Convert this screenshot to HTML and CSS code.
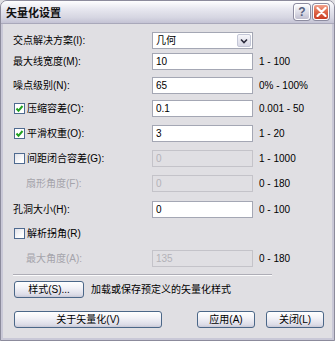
FILE: index.html
```html
<!DOCTYPE html>
<html lang="zh">

<head>
    <meta charset="UTF-8">
    <title>矢量化设置</title>
    <link rel="stylesheet" href="styles.css">
</head>

<body>
    <div class="window">
        <div class="titlebar">
            <span class="title">矢量化设置</span>
            <div class="captionButtons">
                <span class="capBtn helpBtn">?</span>
                <span class="capBtn closeBtn">
                    <svg width="11" height="10" viewBox="0 0 11 10">
                        <path d="M1.5 1 L9.5 9 M9.5 1 L1.5 9" stroke="#fff" stroke-width="2.2" stroke-linecap="round" />
                    </svg>
                </span>
            </div>
        </div>

        <div class="client">
            <div class="form">
                <!-- row 1 -->
                <div class="label">交点解决方案(I):</div>
                <div class="combo">
                    <span class="comboText">几何</span>
                    <span class="comboBtn">
                        <svg width="8" height="6" viewBox="0 0 8 6">
                            <path d="M1 1.5 L4 4.5 L7 1.5" fill="none" stroke="#2b2b3b" stroke-width="1.6" />
                        </svg>
                    </span>
                </div>
                <div class="range"></div>

                <!-- row 2 -->
                <div class="label">最大线宽度(M):</div>
                <input class="field" type="text" value="10">
                <div class="range">1 - 100</div>

                <!-- row 3 -->
                <div class="label">噪点级别(N):</div>
                <input class="field" type="text" value="65">
                <div class="range">0% - 100%</div>

                <!-- row 4 -->
                <div class="label"><span class="check checked"></span>压缩容差(C):</div>
                <input class="field" type="text" value="0.1">
                <div class="range">0.001 - 50</div>

                <!-- row 5 -->
                <div class="label"><span class="check checked"></span>平滑权重(O):</div>
                <input class="field" type="text" value="3">
                <div class="range">1 - 20</div>

                <!-- row 6 -->
                <div class="label"><span class="check"></span>间距闭合容差(G):</div>
                <input class="field" type="text" value="0" disabled>
                <div class="range">1 - 1000</div>

                <!-- row 7 -->
                <div class="label grayed indent">扇形角度(F):</div>
                <input class="field" type="text" value="0" disabled>
                <div class="range">0 - 180</div>

                <!-- row 8 -->
                <div class="label">孔洞大小(H):</div>
                <input class="field" type="text" value="0">
                <div class="range">0 - 100</div>

                <!-- row 9 -->
                <div class="label"><span class="check"></span>解析拐角(R)</div>
                <div></div>
                <div></div>

                <!-- row 10 -->
                <div class="label grayed indent">最大角度(A):</div>
                <input class="field" type="text" value="135" disabled>
                <div class="range">0 - 180</div>
            </div>

            <div class="separator"></div>

            <div class="styleRow">
                <button class="btn styleBtn">样式(S)...</button>
                <span class="hint">加载或保存预定义的矢量化样式</span>
            </div>

            <div class="buttonRow">
                <button class="btn aboutBtn">关于矢量化(V)</button>
                <button class="btn smallBtn applyBtn">应用(A)</button>
                <button class="btn smallBtn">关闭(L)</button>
            </div>
        </div>
    </div>
</body>

</html>
```

FILE: styles.css
```css
body {
    margin: 0;
    padding: 0;
    background-color: #e0dfe3;
    font-family: "Liberation Sans", "Noto Sans CJK SC", sans-serif;
    font-size: 10px;
    color: #000;
    overflow: hidden;
}

.window {
    width: 335px;
    height: 341px;
    box-sizing: border-box;
    border: 1px solid #8c8b9c;
    border-radius: 7px 7px 0 0;
    background-color: #e0dfe3;
    overflow: hidden;
    display: flex;
    flex-direction: column;
}

.titlebar {
    height: 22px;
    flex: none;
    display: flex;
    align-items: center;
    padding-left: 5px;
    padding-right: 5px;
    background: linear-gradient(#fefeff, #e8e8f0 35%, #d6d6e2 75%, #c4c3d4);
    border-bottom: 1px solid #a9a8ba;
}

.title {
    font-family: "Noto Sans CJK SC", sans-serif;
    font-size: 11px;
    font-weight: bold;
    line-height: 14px;
    color: #111;
}

.captionButtons {
    margin-left: auto;
    display: flex;
    gap: 1px;
}

.capBtn {
    width: 16px;
    height: 16px;
    box-sizing: border-box;
    border-radius: 3px;
    display: flex;
    align-items: center;
    justify-content: center;
    border: 1px solid #fff;
    box-shadow: 0 0 0 1px #8d8ca0;
}

.helpBtn {
    background: linear-gradient(#fbfbfd, #d9d9e4 60%, #c0bfd0);
    color: #566180;
    font-weight: bold;
    font-size: 12px;
    font-family: "Liberation Sans", sans-serif;
}

.closeBtn {
    margin-left: 2px;
    background: linear-gradient(#f2a38f, #e06a4c 45%, #c93c24);
}

.client {
    flex: 1;
    border: solid #c9c8d7;
    border-width: 0 2px 2px;
    padding: 8px 8px 0 10px;
}

.form {
    display: grid;
    grid-template-columns: 133px 101px auto;
    grid-template-rows: 21px 24px 23px 25px 25px 25px 26px 24px 25px 17px;
    column-gap: 6px;
}

.label {
    height: 17px;
    display: flex;
    align-items: center;
    line-height: 12px;
    white-space: nowrap;
}

.grayed {
    color: #a5a4ab;
}

.indent {
    padding-left: 13px;
}

.check {
    width: 11px;
    height: 11px;
    box-sizing: border-box;
    margin-left: 1px;
    margin-right: 2px;
    border: 1px solid #4f6a90;
    background: linear-gradient(135deg, #e2e2e9, #fff 75%);
    flex: none;
}

.check.checked {
    background: #fff url("data:image/svg+xml;utf8,<svg xmlns='http://www.w3.org/2000/svg' width='9' height='9' viewBox='0 0 9 9'><path d='M1.5 4.5 L3.5 6.8 L7.5 2' fill='none' stroke='%2321a121' stroke-width='2'/></svg>") center no-repeat;
}

.field {
    width: 101px;
    height: 17px;
    box-sizing: border-box;
    margin: 0;
    padding: 0 3px;
    border: 1px solid #a4a7b4;
    background: #fff;
    font-family: "Liberation Sans", sans-serif;
    font-size: 10px;
    color: #000;
    outline: none;
}

.field:disabled {
    background: #e0dfe3;
    border-color: #c4c3c9;
    color: #b3b2b8;
}

.range {
    height: 17px;
    display: flex;
    align-items: center;
    line-height: 12px;
    white-space: nowrap;
}

.combo {
    width: 101px;
    height: 17px;
    box-sizing: border-box;
    border: 1px solid #a4a7b4;
    background: #fff;
    display: flex;
    align-items: center;
    padding-left: 3px;
}

.comboText {
    line-height: 12px;
}

.comboBtn {
    margin-left: auto;
    margin-right: 1px;
    width: 14px;
    height: 13px;
    box-sizing: border-box;
    border: 1px solid #c3c6d6;
    border-radius: 2px;
    background: linear-gradient(#f6f6fa, #d9d9e6);
    display: flex;
    align-items: center;
    justify-content: center;
}

.separator {
    width: 259px;
    margin-top: 7px;
    border-top: 1px solid #aeadb6;
    border-bottom: 1px solid #fbfbfc;
}

.styleRow {
    margin-top: 5px;
    display: flex;
    align-items: center;
}

.btn {
    height: 17px;
    box-sizing: border-box;
    margin: 0;
    padding: 0;
    border: 1px solid #4b6788;
    border-radius: 3px;
    background: linear-gradient(#ffffff, #f2f2f7 40%, #dcdce7 85%, #c8c8d6);
    font-family: "Liberation Sans", "Noto Sans CJK SC", sans-serif;
    font-size: 10px;
    line-height: 12px;
    color: #000;
}

.styleBtn {
    width: 70px;
    margin-left: 1px;
}

.hint {
    margin-left: 7px;
    line-height: 12px;
}

.buttonRow {
    margin-top: 13px;
    display: flex;
    align-items: center;
}

.aboutBtn {
    width: 148px;
    margin-left: 1px;
}

.smallBtn {
    width: 58px;
}

.applyBtn {
    margin-left: 35px;
    margin-right: 11px;
}
```
